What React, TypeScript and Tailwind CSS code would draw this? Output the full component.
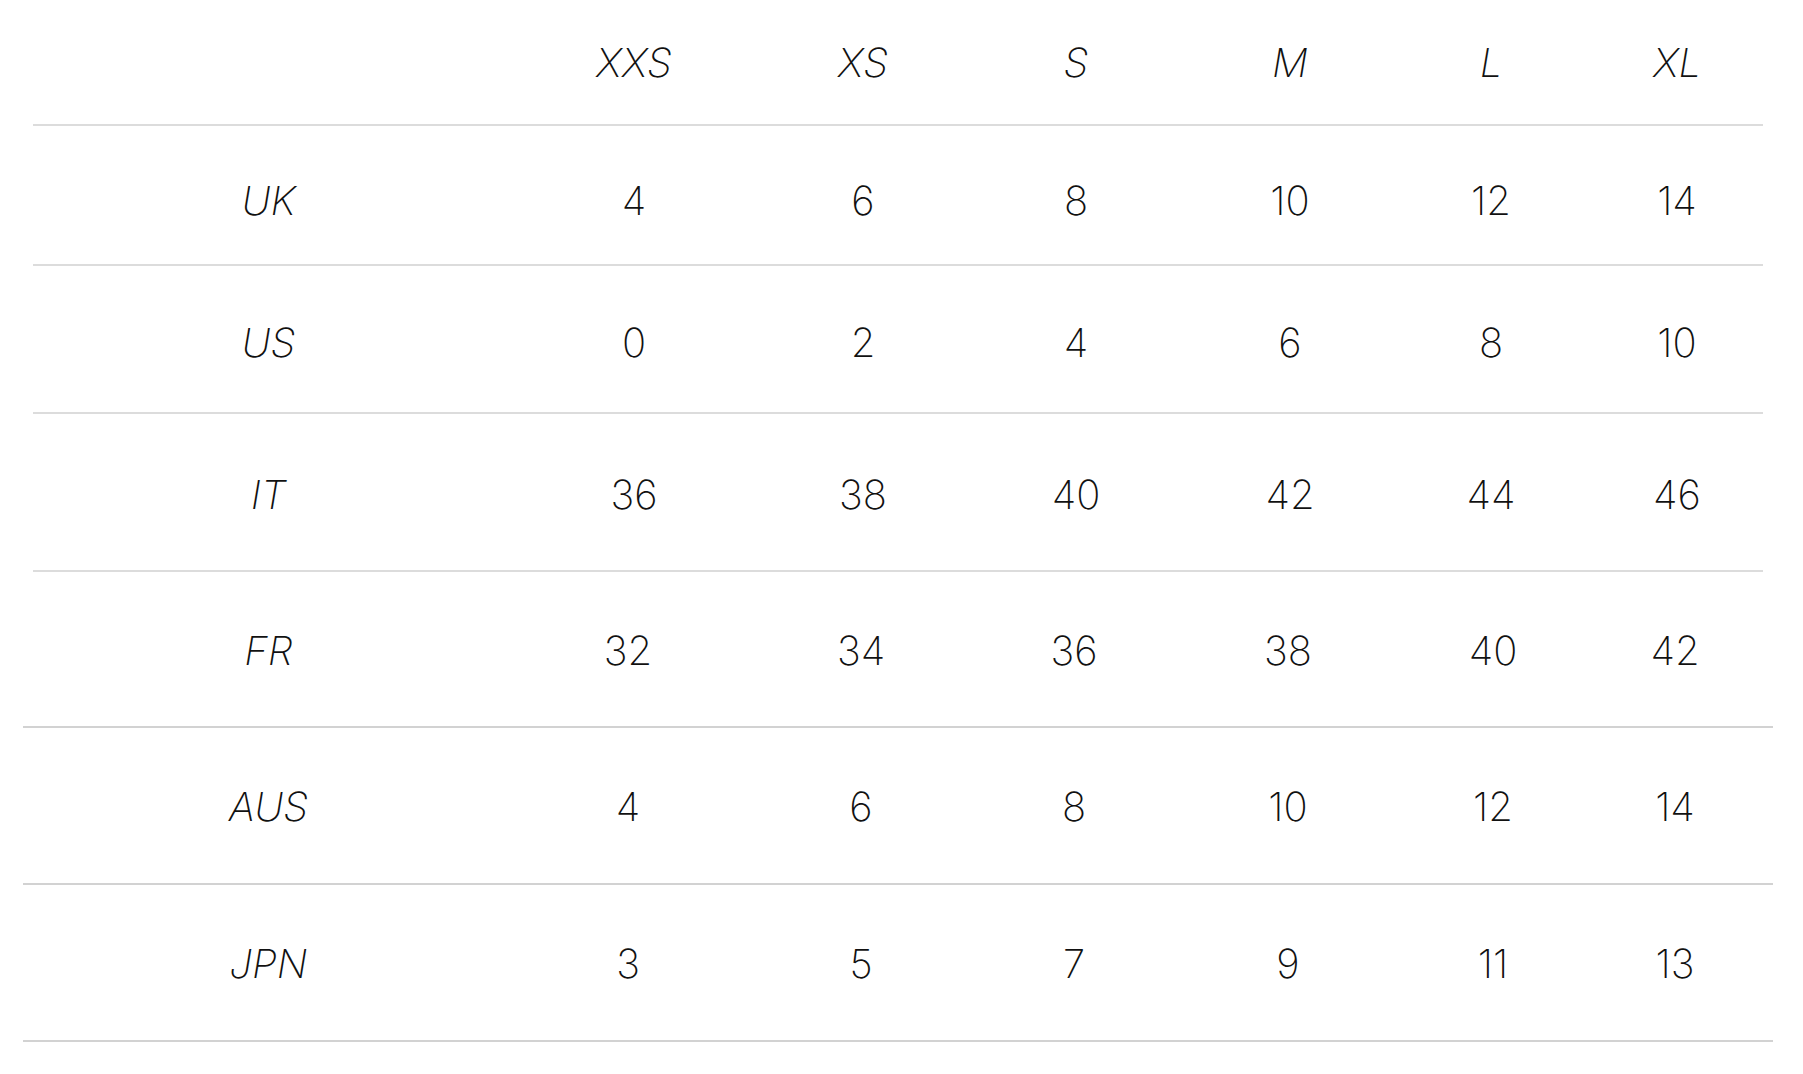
import React from 'react';

const sizes = ['XXS', 'XS', 'S', 'M', 'L', 'XL'];

interface SizeRow {
  label: string;
  values: string[];
  height: string;
  wide?: boolean;
}

const rows: SizeRow[] = [
  { label: 'UK', values: ['4', '6', '8', '10', '12', '14'], height: 'h-[140px] pt-[12px]' },
  { label: 'US', values: ['0', '2', '4', '6', '8', '10'], height: 'h-[148px] pt-[7px]' },
  { label: 'IT', values: ['36', '38', '40', '42', '44', '46'], height: 'h-[158px] pt-[5px]' },
  { label: 'FR', values: ['32', '34', '36', '38', '40', '42'], height: 'h-[156px] pt-[3px]', wide: true },
  { label: 'AUS', values: ['4', '6', '8', '10', '12', '14'], height: 'h-[157px] pt-[3px]', wide: true },
  { label: 'JPN', values: ['3', '5', '7', '9', '11', '13'], height: 'h-[157px] pt-[3px]', wide: true },
];

// column widths tuned so each cell centre sits where the reference has it
const grid = 'grid grid-cols-[471px_260px_198px_228px_200px_202px_170px] items-center';
const wideGrid = 'grid grid-cols-[471px_248px_218px_208px_220px_190px_174px] items-center';

const App: React.FC = () => {
  return (
    <div
      className="min-h-[1074px] w-full bg-white text-[#111] font-extralight"
      style={{ fontFamily: 'Inter, "Noto Sans", sans-serif' }}
    >
      <div className="pl-[33px] pr-[40px]">
        <div className={`${grid} h-[126px] pt-[2px] border-b-2 border-[#dcdcdc]`}>
          <div />
          {sizes.map((s) => (
            <div key={s} className="text-center italic text-[40px] leading-none">
              {s}
            </div>
          ))}
        </div>

        {rows.map((row) => (
          <div
            key={row.label}
            className={
              row.wide
                ? `${wideGrid} ${row.height} -ml-[10px] -mr-[10px] pl-[10px] pr-[10px] border-b-2 border-[#d2d2d2]`
                : `${grid} ${row.height} border-b-2 border-[#dcdcdc]`
            }
          >
            <div className="text-center italic text-[40px] leading-none">{row.label}</div>
            {row.values.map((v, i) => (
              <div key={i} className="text-center text-[40px] leading-none">
                {v}
              </div>
            ))}
          </div>
        ))}
      </div>
    </div>
  );
};

export default App;
